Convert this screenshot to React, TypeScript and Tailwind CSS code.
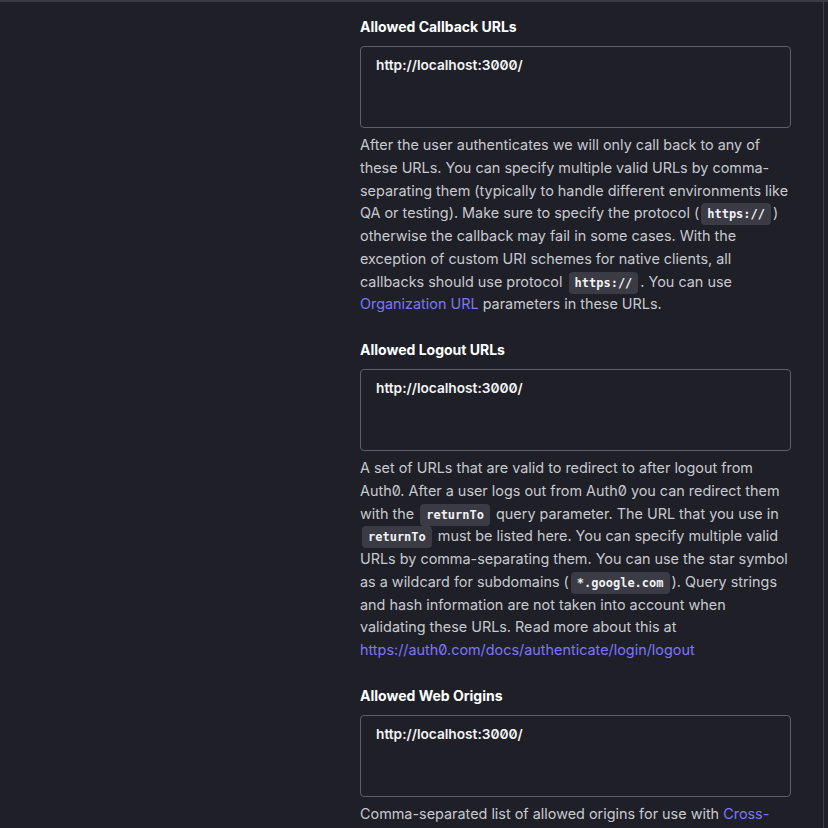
import React from "react";

const Code = ({ children }: { children: React.ReactNode }) => (
  <code className="mx-[2px] rounded-[4px] bg-[#3a3b44] px-[6px] py-[4px] align-baseline font-['DejaVu_Sans_Mono',monospace] text-[12px] font-bold leading-[12px] text-[#f2f2f4]">
    {children}
  </code>
);

const Link = ({ children }: { children: React.ReactNode }) => (
  <a className="text-[#7d75ff]" href="#">
    {children}
  </a>
);

const Field = ({ label, value, children }: { label: string; value: string; children: React.ReactNode }) => (
  <div className="mb-6">
    <div className="mb-[9px] h-5 text-[14px] font-bold leading-5 text-white">{label}</div>
    <div className="h-[82px] rounded-[4px] border border-[#5d5e66] pl-[15px] pt-[8px] text-[13.7px] font-semibold leading-5 text-[#f4f4f6]">
      {value}
    </div>
    <p className="mt-[6px] whitespace-nowrap text-[14.4px] leading-[22.75px] text-[#c8c9cf]">{children}</p>
  </div>
);

export default function App() {
  return (
    <div className="h-[828px] w-[828px] overflow-hidden border-t-2 border-[#3a3b43] bg-[#1e1f27] font-['Inter',sans-serif] [font-feature-settings:'zero']">
      <div className="flex h-full">
        <div className="h-full w-[824px] border-r border-[#3c3d45] pl-[360px] pr-[32px] pt-[15px]">
          <Field label="Allowed Callback URLs" value="http://localhost:3000/">
            After the user authenticates we will only call back to any of
            <br />
            these URLs. You can specify multiple valid URLs by comma-
            <br />
            separating them (typically to handle different environments like
            <br />
            QA or testing). Make sure to specify the protocol (<Code>https://</Code>)
            <br />
            otherwise the callback may fail in some cases. With the
            <br />
            exception of custom URI schemes for native clients, all
            <br />
            callbacks should use protocol <Code>https://</Code>. You can use
            <br />
            <Link>Organization URL</Link> parameters in these URLs.
          </Field>
          <Field label="Allowed Logout URLs" value="http://localhost:3000/">
            A set of URLs that are valid to redirect to after logout from
            <br />
            Auth0. After a user logs out from Auth0 you can redirect them
            <br />
            with the <Code>returnTo</Code> query parameter. The URL that you use in
            <br />
            <Code>returnTo</Code> must be listed here. You can specify multiple valid
            <br />
            URLs by comma-separating them. You can use the star symbol
            <br />
            as a wildcard for subdomains (<Code>*.google.com</Code>). Query strings
            <br />
            and hash information are not taken into account when
            <br />
            validating these URLs. Read more about this at
            <br />
            <Link>https://auth0.com/docs/authenticate/login/logout</Link>
          </Field>
          <Field label="Allowed Web Origins" value="http://localhost:3000/">
            Comma-separated list of allowed origins for use with <Link>Cross-</Link>
            <br />
            <Link>Origin Authentication</Link>, Device Flow, and web message
          </Field>
        </div>
        <div className="flex-1" />
      </div>
    </div>
  );
}
